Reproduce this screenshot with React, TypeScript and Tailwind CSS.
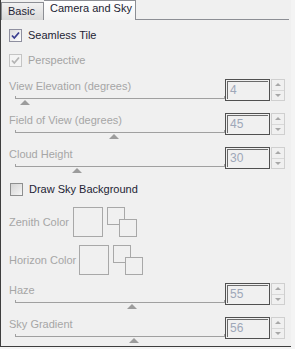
import React from "react";

const font = { fontFamily: '"Liberation Sans", Arial, sans-serif' };

function Check({ checked, disabled, label }: { checked: boolean; disabled?: boolean; label: string }) {
  return (
    <div className="flex items-center h-[13px]">
      <div
        className={`w-[13px] h-[13px] border flex items-center justify-center ${
          disabled
            ? "border-[#c4c4c4] bg-[#f4f4f4]"
            : checked
            ? "border-[#8e8f9f] bg-gradient-to-br from-[#dcdcdc] to-[#ffffff]"
            : "border-[#8e8f8f] bg-gradient-to-br from-[#d4d4d4] to-[#f6f6f6]"
        }`}
      >
        {checked && (
          <svg width="11" height="11" viewBox="0 0 11 11">
            <path
              d="M2 5.5 L4.3 8 L9 2.5"
              fill="none"
              stroke={disabled ? "#b4b4b4" : "#3b3f8f"}
              strokeWidth="1.8"
            />
          </svg>
        )}
      </div>
      <span
        className={`ml-[6px] text-[11px] leading-[13px] ${disabled ? "text-[#a3a3a3]" : "text-[#1e1e34]"}`}
      >
        {label}
      </span>
    </div>
  );
}

function SliderGroup({ label, value, thumb }: { label: string; value: number; thumb: number }) {
  return (
    <div className="flex h-[34px] pr-[6px]">
      <div className="flex-1">
        <div className="mt-[1px] text-[11px] leading-[13px] text-[#a6a6a6]">{label}</div>
        <div className="relative ml-[6px] mt-[3px] w-[210px] h-[3px] border-l border-r border-b border-[#a0a0a0]">
          <div
            className="absolute top-[4px] w-0 h-0 border-l-[5px] border-r-[5px] border-b-[5px] border-l-transparent border-r-transparent border-b-[#9c9c9c]"
            style={{ left: thumb - 5 }}
          />
        </div>
      </div>
      <div className="flex h-[22px]">
        <div className="w-[45px] h-[22px] border border-[#505050] p-[1px]">
          <div className="w-full h-full border-t border-l border-[#6a6a6a] pl-[2px] text-[12px] leading-[17px] text-[#9ea7b8]">
            {value}
          </div>
        </div>
        <div className="ml-[1px] w-[14px] h-[22px] border border-[#cfcfcf] flex flex-col">
          <div className="flex-1 flex items-center justify-center border-b border-[#d8d8d8]">
            <div className="w-0 h-0 border-l-[3px] border-r-[3px] border-b-[3px] border-l-transparent border-r-transparent border-b-[#a8a8a8]" />
          </div>
          <div className="flex-1 flex items-center justify-center">
            <div className="w-0 h-0 border-l-[3px] border-r-[3px] border-t-[3px] border-l-transparent border-r-transparent border-t-[#a8a8a8]" />
          </div>
        </div>
      </div>
    </div>
  );
}

function ColorRow({ label, bigLeft }: { label: string; bigLeft: number }) {
  return (
    <div className="flex items-center h-[30px]">
      <span className="text-[11px] leading-[13px] text-[#a6a6a6]" style={{ width: bigLeft - 8 }}>
        {label}
      </span>
      <div className="w-[30px] h-[30px] border border-[#a8a8a8]" />
      <div className="relative ml-[4px] w-[30px] h-[30px]">
        <div className="absolute left-0 top-0 w-[18px] h-[18px] border border-[#a8a8a8]" />
        <div className="absolute left-[12px] top-[12px] w-[18px] h-[18px] border border-[#a8a8a8] bg-[#f0f0f0]" />
      </div>
    </div>
  );
}

export default function App() {
  return (
    <div className="w-[295px] h-[349px] bg-[#f4f4f4]" style={font}>
      <div className="w-[291px] h-[347px] bg-[#f0f0f0] border-l border-b border-[#3e3e3e] flex flex-col">
        {/* Tab strip */}
        <div className="flex items-end h-[20px]">
          <div className="w-[43px] h-[18px] border border-b-0 border-[#8c8e94] bg-gradient-to-b from-[#f2f2f2] to-[#d9d9d9] text-[11px] leading-[16px] pl-[6px] text-[#1e1e34]">
            Basic
          </div>
          <div className="w-[92px] h-[20px] border-t border-r border-[#8c8e94] bg-gradient-to-b from-[#ffffff] to-[#f4f4f4] text-[11px] leading-[14px] pl-[6px] text-[#1e1e34]">
            Camera and Sky
          </div>
          <div className="flex-1 h-[1px] bg-[#8c8e94] mr-[2px]" />
        </div>

        <div className="flex flex-col pl-[8px]">
          <div className="mt-[9px]">
            <Check checked label="Seamless Tile" />
          </div>
          <div className="mt-[12px]">
            <Check checked disabled label="Perspective" />
          </div>
          <div className="mt-[12px]">
            <SliderGroup label="View Elevation (degrees)" value={4} thumb={9} />
            <SliderGroup label="Field of View (degrees)" value={45} thumb={98} />
            <SliderGroup label="Cloud Height" value={30} thumb={61} />
          </div>
          <div className="mt-[2px] pl-[1px]">
            <Check checked={false} label="Draw Sky Background" />
          </div>
          <div className="mt-[11px]">
            <ColorRow label="Zenith Color" bigLeft={72} />
          </div>
          <div className="mt-[8px]">
            <ColorRow label="Horizon Color" bigLeft={78} />
          </div>
          <div className="mt-[8px]">
            <SliderGroup label="Haze" value={55} thumb={116} />
            <SliderGroup label="Sky Gradient" value={56} thumb={118} />
          </div>
        </div>
      </div>
    </div>
  );
}
